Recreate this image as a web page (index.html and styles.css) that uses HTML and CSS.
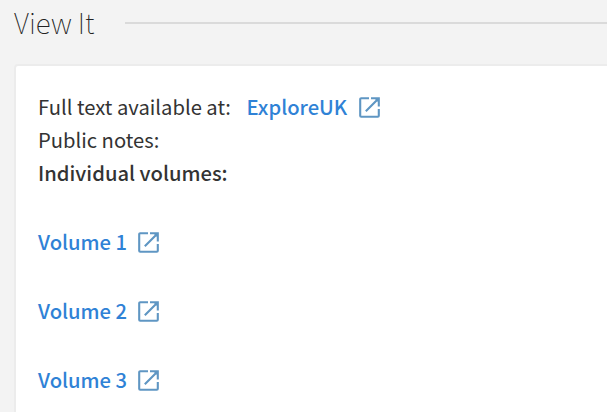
FILE: index.html
```
<!DOCTYPE html>
<html lang="en">
<head>
<meta charset="utf-8">
<title>View It</title>
<link rel="stylesheet" href="styles.css">
</head>
<body>
<svg class="symbols" aria-hidden="true">
  <symbol id="external" viewBox="0 0 21 21">
    <path d="M10 1.2H2.2Q1.2 1.2 1.2 2.2V18.8Q1.2 19.8 2.2 19.8H18.8Q19.8 19.8 19.8 18.8V12M12 1.2H19.8V9.6M19.3 1.7L6.8 14.2"/>
    <path class="tip" d="M15 1H20V6Z"/>
  </symbol>
</svg>
<header class="heading"><h2 class="title">View It</h2><span class="rule"></span></header>
<main class="card">
  <div class="row"><span class="label">Full text available at:</span><a class="link"><span class="name explore">ExploreUK</span><svg class="icon"><use href="#external"/></svg></a></div>
  <div class="row"><span class="notes">Public notes:</span></div>
  <div class="row"><strong class="strong">Individual volumes:</strong></div>
  <div class="row volume"><a class="link"><span class="name">Volume 1</span><svg class="icon"><use href="#external"/></svg></a></div>
  <div class="row volume"><a class="link"><span class="name">Volume 2</span><svg class="icon"><use href="#external"/></svg></a></div>
  <div class="row volume"><a class="link"><span class="name">Volume 3</span><svg class="icon"><use href="#external"/></svg></a></div>
</main>
</body>
</html>
```
FILE: styles.css
```
* { box-sizing: border-box; }
body { margin: 0; height: 412px; overflow: hidden; background: #f3f3f3; color: #333; font-family: "Noto Sans CJK SC", "Noto Sans", sans-serif; font-size: 20.2px; line-height: 33px; }
.symbols { display: none; }
.heading { display: flex; align-items: center; height: 46px; padding-left: 14px; }
.title { width: 111px; margin: 0; padding-bottom: 2px; font-size: 28px; font-weight: 100; line-height: 44px; color: #222; white-space: nowrap; }
.rule { flex: 1; height: 2px; background: #dadada; }
.card { height: 348px; margin: 18px -10px 0 14px; padding: 24px 0 0 22px; background: #fff; border: 2px solid #ececec; border-bottom: 0; border-radius: 4px 0 0 0; }
.row { display: flex; align-items: center; height: 33px; white-space: nowrap; }
.label { width: 208.5px; }
.strong { font-weight: 500; }
.volume { margin-top: 36px; }
.link { display: flex; align-items: center; color: #2f82d6; font-weight: 500; }
.name { width: 100px; }
.explore { width: 112.5px; }
.icon { width: 21px; height: 21px; margin-top: 2px; fill: none; stroke: #5f96c3; stroke-width: 2.1; }
.tip { fill: #5f96c3; stroke: none; }
```
